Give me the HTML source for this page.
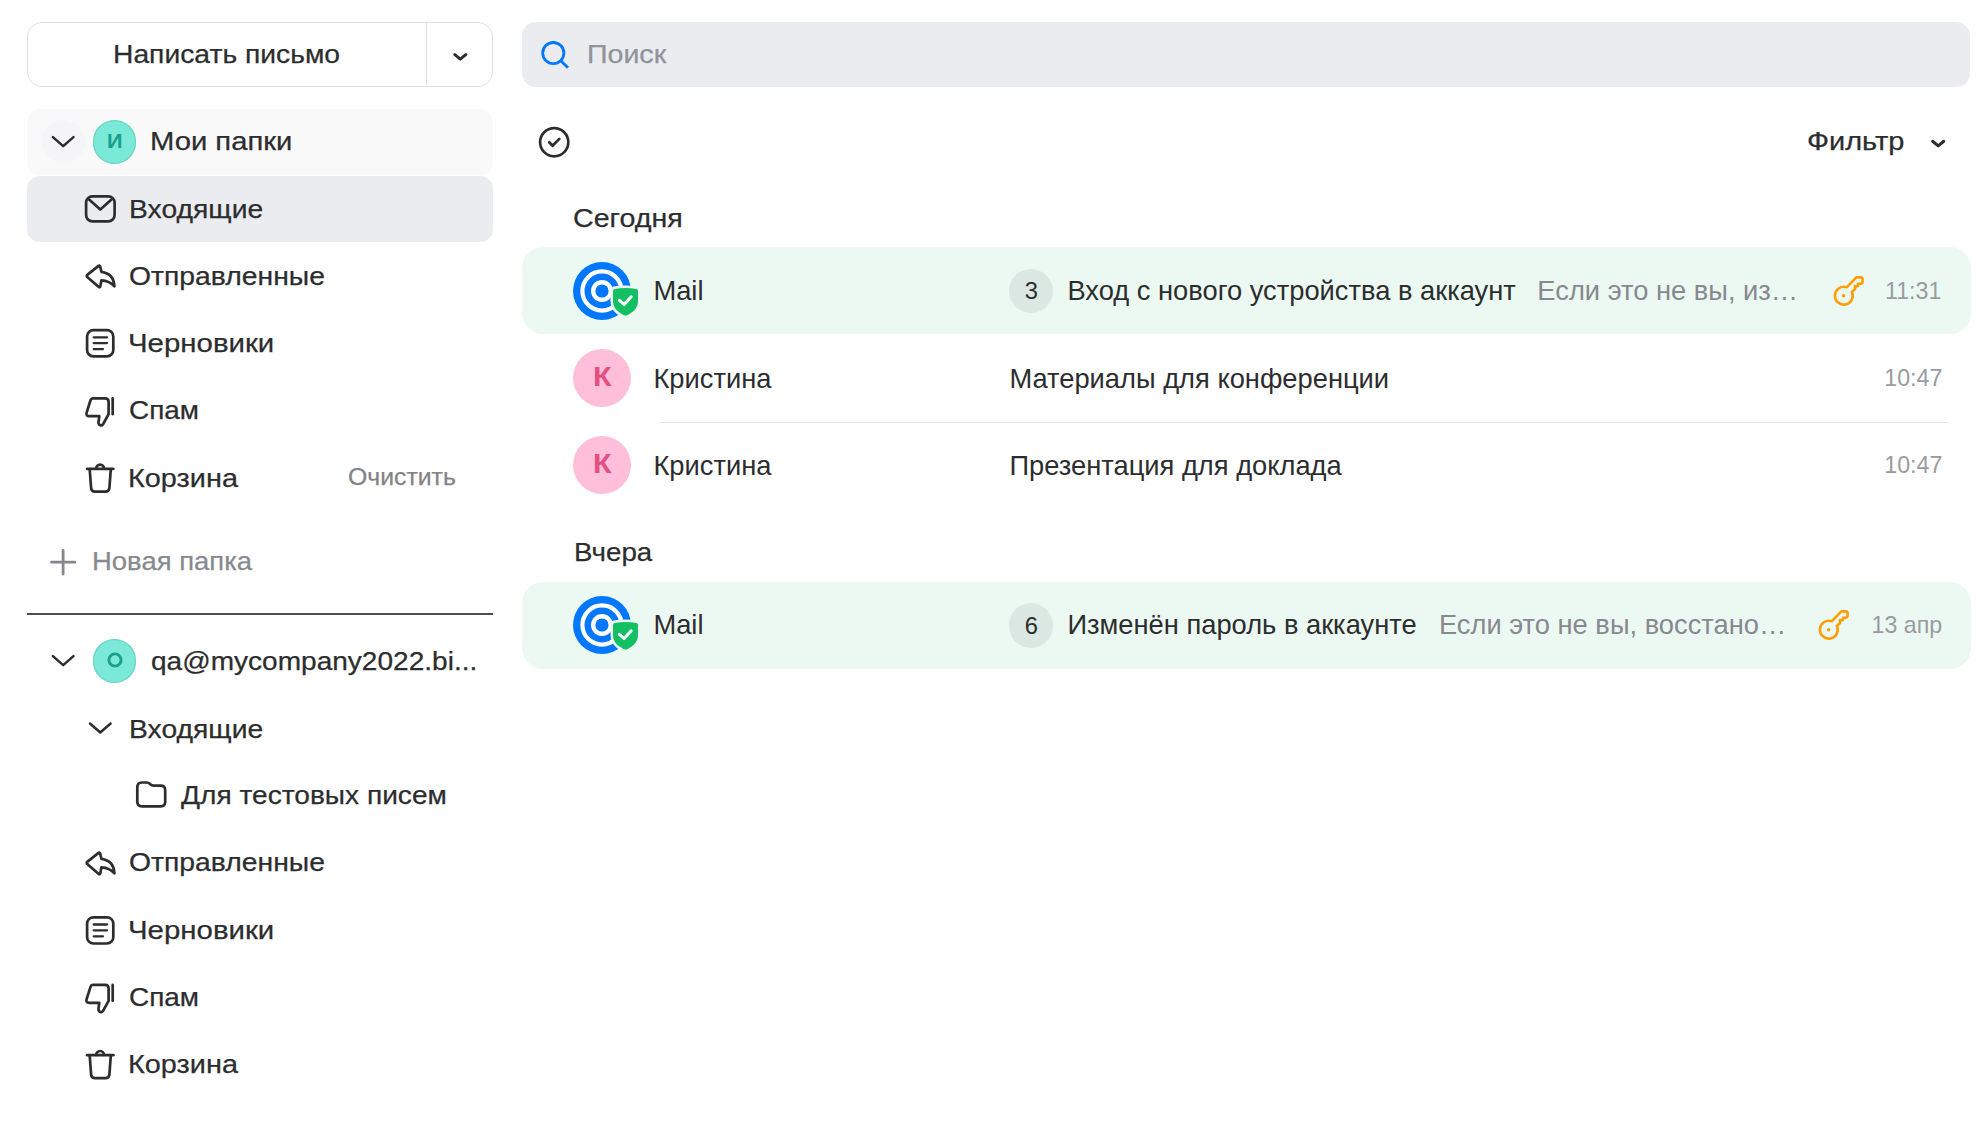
<!DOCTYPE html>
<html lang="ru"><head><meta charset="utf-8"><title>Mail</title>
<style>
html,body{margin:0;padding:0;background:#fff;}
body{width:1985px;height:1137px;position:relative;overflow:hidden;font-family:"Liberation Sans",sans-serif;}
.t{position:absolute;white-space:nowrap;transform-origin:0 0;display:block;}
.b{position:absolute;display:block;}
</style></head><body>
<div class="b" style="left:27px;top:22px;width:466px;height:65px;border:1px solid #dfe0e6;border-radius:15px;box-sizing:border-box;background:#fff"></div>
<div class="b" style="left:426px;top:23px;width:1px;height:63px;background:#dfe0e6"></div>
<div class="b" style="left:27px;top:109px;width:466px;height:65.5px;border-radius:13px;background:#f9f9fa"></div>
<div class="b" style="left:42px;top:120.3px;width:43px;height:43px;border-radius:50%;background:#f5f5f7"></div>
<div class="b" style="left:27px;top:176.3px;width:466px;height:65.7px;border-radius:13px;background:#ebecf0"></div>
<div class="b" style="left:27px;top:613.2px;width:466px;height:1.6px;background:#4b4c4e"></div>
<div class="b" style="left:522px;top:22px;width:1448px;height:65px;border-radius:14px;background:#ebecf0"></div>
<div class="b" style="left:522px;top:247px;width:1449px;height:87px;border-radius:21px;background:#ecf9f3"></div>
<div class="b" style="left:522px;top:582px;width:1449px;height:86.8px;border-radius:21px;background:#ecf9f3"></div>
<div class="b" style="left:660px;top:422px;width:1289px;height:1.3px;background:#e3e4ea"></div>
<div class="b" style="left:92.8px;top:120.3px;width:43.4px;height:43.4px;border-radius:50%;background:#7be9d7;box-shadow:inset 0 0 0 1.2px #6fd6c5"></div>
<div class="b" style="left:92.8px;top:639.3px;width:43.4px;height:43.4px;border-radius:50%;background:#7be9d7;box-shadow:inset 0 0 0 1.2px #6fd6c5"></div>
<span class="t" style="left:107.34px;top:128.00px;font-size:20.5px;line-height:25px;color:#16a08b;font-weight:700;transform:scaleX(1.0543);">И</span>
<svg class="b" style="left:104.5px;top:649.7px" width="20" height="20"><circle cx="10" cy="10" r="6.1" fill="none" stroke="#1b9f8b" stroke-width="2.9"/></svg>
<div class="b" style="left:573px;top:349px;width:58px;height:58px;border-radius:50%;background:#ffbfdb"></div>
<div class="b" style="left:573px;top:436px;width:58px;height:58px;border-radius:50%;background:#ffbfdb"></div>
<svg class="b" style="left:572px;top:261px" width="72" height="62" viewBox="0 0 72 62">
<circle cx="30" cy="30" r="29" fill="#0077ff"/>
<circle cx="30" cy="30" r="19.6" fill="none" stroke="#fff" stroke-width="4.2"/>
<circle cx="30" cy="30" r="8.8" fill="none" stroke="#fff" stroke-width="4.4"/>
<path d="M41.6 25.4 Q53.5 23.6 65.4 25.4 Q68.5 25.9 68.5 29 L68.5 40 C68.5 49.5 61.5 54.6 53.6 57.6 C45.5 54.6 38.5 49.5 38.5 40 L38.5 29 Q38.5 25.9 41.6 25.4 Z" fill="#ecf9f3"/>
<path d="M42.6 27.9 Q53.5 26.3 64.4 27.9 Q66 28.2 66 29.8 L66 40 C66 47.5 60.5 52 53.6 54.8 C46.5 52 41 47.5 41 40 L41 29.8 Q41 28.2 42.6 27.9 Z" fill="#12bf63"/>
<path d="M47.4 39.3 L52.1 43.5 L59.2 35.8" fill="none" stroke="#fff" stroke-width="3" stroke-linecap="round" stroke-linejoin="round"/>
</svg>
<svg class="b" style="left:572px;top:595.3px" width="72" height="62" viewBox="0 0 72 62">
<circle cx="30" cy="30" r="29" fill="#0077ff"/>
<circle cx="30" cy="30" r="19.6" fill="none" stroke="#fff" stroke-width="4.2"/>
<circle cx="30" cy="30" r="8.8" fill="none" stroke="#fff" stroke-width="4.4"/>
<path d="M41.6 25.4 Q53.5 23.6 65.4 25.4 Q68.5 25.9 68.5 29 L68.5 40 C68.5 49.5 61.5 54.6 53.6 57.6 C45.5 54.6 38.5 49.5 38.5 40 L38.5 29 Q38.5 25.9 41.6 25.4 Z" fill="#ecf9f3"/>
<path d="M42.6 27.9 Q53.5 26.3 64.4 27.9 Q66 28.2 66 29.8 L66 40 C66 47.5 60.5 52 53.6 54.8 C46.5 52 41 47.5 41 40 L41 29.8 Q41 28.2 42.6 27.9 Z" fill="#12bf63"/>
<path d="M47.4 39.3 L52.1 43.5 L59.2 35.8" fill="none" stroke="#fff" stroke-width="3" stroke-linecap="round" stroke-linejoin="round"/>
</svg>
<div class="b" style="left:1008.8px;top:268.8px;width:44.4px;height:44.4px;border-radius:50%;background:#dbe7e3"></div>
<div class="b" style="left:1008.8px;top:603.1999999999999px;width:44.4px;height:44.4px;border-radius:50%;background:#dbe7e3"></div>
<span class="t" style="left:113.27px;top:38.00px;font-size:26.4px;line-height:32px;color:#2c2d2e;transform:scaleX(1.0708);-webkit-text-stroke:0.25px;">Написать письмо</span>
<span class="t" style="left:150.19px;top:125.00px;font-size:26.4px;line-height:32px;color:#2c2d2e;transform:scaleX(1.1071);-webkit-text-stroke:0.25px;">Мои папки</span>
<span class="t" style="left:128.51px;top:193.25px;font-size:26.4px;line-height:32px;color:#2c2d2e;transform:scaleX(1.0725);-webkit-text-stroke:0.25px;">Входящие</span>
<span class="t" style="left:129.23px;top:260.00px;font-size:26.4px;line-height:32px;color:#2c2d2e;transform:scaleX(1.0733);-webkit-text-stroke:0.25px;">Отправленные</span>
<span class="t" style="left:128.22px;top:327.00px;font-size:26.4px;line-height:32px;color:#2c2d2e;transform:scaleX(1.1147);-webkit-text-stroke:0.25px;">Черновики</span>
<span class="t" style="left:129.12px;top:394.00px;font-size:26.4px;line-height:32px;color:#2c2d2e;transform:scaleX(1.0587);-webkit-text-stroke:0.25px;">Спам</span>
<span class="t" style="left:128.47px;top:462.00px;font-size:26.4px;line-height:32px;color:#2c2d2e;transform:scaleX(1.0938);-webkit-text-stroke:0.25px;">Корзина</span>
<span class="t" style="left:348.15px;top:463.40px;font-size:23.6px;line-height:28px;color:#838387;transform:scaleX(1.0496);-webkit-text-stroke:0.25px;">Очистить</span>
<span class="t" style="left:92.08px;top:545.00px;font-size:26.4px;line-height:32px;color:#87898f;transform:scaleX(1.0405);-webkit-text-stroke:0.25px;">Новая папка</span>
<span class="t" style="left:151.38px;top:645.00px;font-size:26.4px;line-height:32px;color:#2c2d2e;transform:scaleX(1.0628);-webkit-text-stroke:0.25px;">qa@mycompany2022.bi...</span>
<span class="t" style="left:128.51px;top:712.50px;font-size:26.4px;line-height:32px;color:#2c2d2e;transform:scaleX(1.0725);-webkit-text-stroke:0.25px;">Входящие</span>
<span class="t" style="left:181.13px;top:779.25px;font-size:26.4px;line-height:32px;color:#2c2d2e;transform:scaleX(1.0652);-webkit-text-stroke:0.25px;">Для тестовых писем</span>
<span class="t" style="left:129.23px;top:846.00px;font-size:26.4px;line-height:32px;color:#2c2d2e;transform:scaleX(1.0733);-webkit-text-stroke:0.25px;">Отправленные</span>
<span class="t" style="left:128.22px;top:913.50px;font-size:26.4px;line-height:32px;color:#2c2d2e;transform:scaleX(1.1147);-webkit-text-stroke:0.25px;">Черновики</span>
<span class="t" style="left:129.12px;top:980.50px;font-size:26.4px;line-height:32px;color:#2c2d2e;transform:scaleX(1.0587);-webkit-text-stroke:0.25px;">Спам</span>
<span class="t" style="left:128.47px;top:1048.00px;font-size:26.4px;line-height:32px;color:#2c2d2e;transform:scaleX(1.0938);-webkit-text-stroke:0.25px;">Корзина</span>
<span class="t" style="left:587.13px;top:38.00px;font-size:26.4px;line-height:32px;color:#909399;transform:scaleX(1.0824);-webkit-text-stroke:0.25px;">Поиск</span>
<span class="t" style="left:1807.10px;top:124.75px;font-size:26.4px;line-height:32px;color:#2c2d2e;transform:scaleX(1.0977);-webkit-text-stroke:0.25px;">Фильтр</span>
<span class="t" style="left:573.09px;top:201.75px;font-size:26.4px;line-height:32px;color:#2c2d2e;transform:scaleX(1.0850);-webkit-text-stroke:0.25px;">Сегодня</span>
<span class="t" style="left:573.66px;top:535.75px;font-size:26.4px;line-height:32px;color:#2c2d2e;transform:scaleX(1.0495);-webkit-text-stroke:0.25px;">Вчера</span>
<span class="t" style="left:653.44px;top:273.60px;font-size:27.3px;line-height:33px;color:#2c2d2e;">Mail</span>
<span class="t" style="left:1024.87px;top:275.80px;font-size:23.8px;line-height:29px;color:#2c2d2e;">3</span>
<span class="t" style="left:1067.44px;top:273.60px;font-size:27.3px;line-height:33px;color:#2c2d2e;">Вход с нового устройства в аккаунт</span>
<span class="t" style="left:1537.35px;top:273.60px;font-size:27.3px;line-height:33px;color:#88888f;">Если это не вы, из…</span>
<span class="t" style="left:1884.98px;top:276.75px;font-size:23.2px;line-height:28px;color:#999ba0;">11:31</span>
<span class="t" style="left:653.44px;top:361.50px;font-size:27.3px;line-height:33px;color:#2c2d2e;">Кристина</span>
<span class="t" style="left:1009.44px;top:361.50px;font-size:27.3px;line-height:33px;color:#2c2d2e;">Материалы для конференции</span>
<span class="t" style="left:1884.25px;top:364.00px;font-size:23.2px;line-height:28px;color:#999ba0;">10:47</span>
<span class="t" style="left:653.44px;top:448.50px;font-size:27.3px;line-height:33px;color:#2c2d2e;">Кристина</span>
<span class="t" style="left:1009.46px;top:448.50px;font-size:27.3px;line-height:33px;color:#2c2d2e;">Презентация для доклада</span>
<span class="t" style="left:1884.25px;top:451.00px;font-size:23.2px;line-height:28px;color:#999ba0;">10:47</span>
<span class="t" style="left:653.44px;top:608.30px;font-size:27.3px;line-height:33px;color:#2c2d2e;">Mail</span>
<span class="t" style="left:1024.81px;top:610.50px;font-size:23.8px;line-height:29px;color:#2c2d2e;">6</span>
<span class="t" style="left:1067.44px;top:608.30px;font-size:27.3px;line-height:33px;color:#2c2d2e;">Изменён пароль в аккаунте</span>
<span class="t" style="left:1438.94px;top:608.30px;font-size:27.3px;line-height:33px;color:#88888f;">Если это не вы, восстано…</span>
<span class="t" style="left:1871.54px;top:611.00px;font-size:23.2px;line-height:28px;color:#999ba0;">13 апр</span>
<span class="t" style="left:592.73px;top:360.10px;font-size:27.6px;line-height:33px;color:#e34f7f;font-weight:700;transform:scaleX(1.1019);">К</span>
<span class="t" style="left:592.73px;top:447.30px;font-size:27.6px;line-height:33px;color:#e34f7f;font-weight:700;transform:scaleX(1.1019);">К</span>
<svg class="b" style="left:0;top:0" width="1985" height="1137" viewBox="0 0 1985 1137" ><path d="M454.8 54.699999999999996 L460.3 59.1 L465.8 54.699999999999996" fill="none" stroke="#2c2d2e" stroke-width="3" stroke-linecap="round" stroke-linejoin="round"/><path d="M1932.6000000000001 141.25 L1938.2 145.95 L1943.8 141.25" fill="none" stroke="#2c2d2e" stroke-width="3" stroke-linecap="round" stroke-linejoin="round"/><path d="M52.900000000000006 137.1 L63.2 146.1 L73.5 137.1" fill="none" stroke="#2c2d2e" stroke-width="2.5" stroke-linecap="round" stroke-linejoin="round"/><path d="M52.900000000000006 656.1 L63.2 665.1 L73.5 656.1" fill="none" stroke="#2c2d2e" stroke-width="2.5" stroke-linecap="round" stroke-linejoin="round"/><path d="M90.0 723.5 L100.3 732.5 L110.6 723.5" fill="none" stroke="#2c2d2e" stroke-width="2.5" stroke-linecap="round" stroke-linejoin="round"/><path d="M51.5 562.2 H74.8 M63.1 550.5 V574" fill="none" stroke="#85878d" stroke-width="2.8" stroke-linecap="round"/><g transform="translate(84.8 195)" fill="none" stroke="#2c2d2e" stroke-width="2.7" stroke-linecap="round" stroke-linejoin="round"><rect x="1.3" y="1.3" width="28.5" height="25" rx="6.3"/><path d="M4.3 4.6 L15.5 14.6 L26.7 4.6"/></g><g transform="translate(85 264)" fill="none" stroke="#2c2d2e" stroke-width="2.7" stroke-linecap="round" stroke-linejoin="round"><path d="M2.56 10.66 L13.24 2.14 Q14.8 0.9 15.25 2.85 L16.4 7.8 C24 8.8 29 13.6 29.4 22.4 C26 18.4 22 16.6 16.4 16.3 L15.36 22.04 Q15 24 13.49 22.69 L2.51 13.21 Q1 11.9 2.56 10.66 Z"/></g><g transform="translate(85 851)" fill="none" stroke="#2c2d2e" stroke-width="2.7" stroke-linecap="round" stroke-linejoin="round"><path d="M2.56 10.66 L13.24 2.14 Q14.8 0.9 15.25 2.85 L16.4 7.8 C24 8.8 29 13.6 29.4 22.4 C26 18.4 22 16.6 16.4 16.3 L15.36 22.04 Q15 24 13.49 22.69 L2.51 13.21 Q1 11.9 2.56 10.66 Z"/></g><g transform="translate(85.8 328.8)" fill="none" stroke="#2c2d2e" stroke-width="2.7" stroke-linecap="round" stroke-linejoin="round"><rect x="1.3" y="1.3" width="26.2" height="26.2" rx="6.3"/><path d="M7.9 8.5 H21.2 M7.9 14.3 H21.2 M7.9 20.3 H17.2" stroke-width="2.3"/></g><g transform="translate(85.8 916)" fill="none" stroke="#2c2d2e" stroke-width="2.7" stroke-linecap="round" stroke-linejoin="round"><rect x="1.3" y="1.3" width="26.2" height="26.2" rx="6.3"/><path d="M7.9 8.5 H21.2 M7.9 14.3 H21.2 M7.9 20.3 H17.2" stroke-width="2.3"/></g><g transform="translate(85 397)" fill="none" stroke="#2c2d2e" stroke-width="2.7" stroke-linecap="round" stroke-linejoin="round"><path d="M7.6 1.3 H20 Q23.6 1.3 23.6 4.9 V17.2 L18.2 27 Q17 29 15.2 28.3 Q13.2 27.4 13.5 25 L14.3 19.2 H4.4 Q0.6 19.2 1.6 15.6 L5.6 3 Q6.2 1.3 7.6 1.3 Z"/><path d="M27.7 1.3 V17.2"/></g><g transform="translate(85 983.6)" fill="none" stroke="#2c2d2e" stroke-width="2.7" stroke-linecap="round" stroke-linejoin="round"><path d="M7.6 1.3 H20 Q23.6 1.3 23.6 4.9 V17.2 L18.2 27 Q17 29 15.2 28.3 Q13.2 27.4 13.5 25 L14.3 19.2 H4.4 Q0.6 19.2 1.6 15.6 L5.6 3 Q6.2 1.3 7.6 1.3 Z"/><path d="M27.7 1.3 V17.2"/></g><g transform="translate(85.8 462.6)" fill="none" stroke="#2c2d2e" stroke-width="2.7" stroke-linecap="round" stroke-linejoin="round"><path d="M1.3 6.2 H27.6"/><path d="M10.4 5.9 A3.9 3.9 0 0 1 18.2 5.9"/><path d="M3.9 6.6 L5.3 25.3 Q5.6 29.1 9.2 29.1 H19.7 Q23.3 29.1 23.6 25.3 L25 6.6"/></g><g transform="translate(85.8 1049)" fill="none" stroke="#2c2d2e" stroke-width="2.7" stroke-linecap="round" stroke-linejoin="round"><path d="M1.3 6.2 H27.6"/><path d="M10.4 5.9 A3.9 3.9 0 0 1 18.2 5.9"/><path d="M3.9 6.6 L5.3 25.3 Q5.6 29.1 9.2 29.1 H19.7 Q23.3 29.1 23.6 25.3 L25 6.6"/></g><g transform="translate(136 781.2)" fill="none" stroke="#2c2d2e" stroke-width="2.7" stroke-linecap="round" stroke-linejoin="round"><path d="M1.3 6 Q1.3 1.3 6 1.3 H10.6 Q12.6 1.3 14 2.8 Q15.6 4.4 17.8 4.4 H24.6 Q29.2 4.4 29.2 9 V20.6 Q29.2 25.2 24.6 25.2 H6 Q1.3 25.2 1.3 20.6 Z"/></g><g fill="none" stroke="#0077ff" stroke-width="2.8"><circle cx="553.3" cy="53.1" r="10.6"/><path d="M561 60.9 L568 67.8"/></g><g fill="none" stroke="#2c2d2e" stroke-width="2.7" stroke-linecap="round" stroke-linejoin="round"><circle cx="554.2" cy="142.2" r="14.1"/><path d="M549.2 142.2 L552.6 145.8 L559.3 138.9"/></g><g transform="translate(0 0)"><path d="M1846.7 287.3 L1856.3 277.4 H1860.6 Q1862.6 277.4 1862.6 279.4 V281.6 Q1862.6 283.7 1860.5 283.7 H1858 V286.1 H1855 V289 L1851.9 292 A8.9 8.9 0 1 1 1846.7 287.3 Z" fill="none" stroke="#ff9e00" stroke-width="2.6" stroke-linejoin="round"/><circle cx="1843.6" cy="295.8" r="1.8" fill="#ff9e00"/></g><g transform="translate(-15 334)"><path d="M1846.7 287.3 L1856.3 277.4 H1860.6 Q1862.6 277.4 1862.6 279.4 V281.6 Q1862.6 283.7 1860.5 283.7 H1858 V286.1 H1855 V289 L1851.9 292 A8.9 8.9 0 1 1 1846.7 287.3 Z" fill="none" stroke="#ff9e00" stroke-width="2.6" stroke-linejoin="round"/><circle cx="1843.6" cy="295.8" r="1.8" fill="#ff9e00"/></g></svg>
</body></html>
